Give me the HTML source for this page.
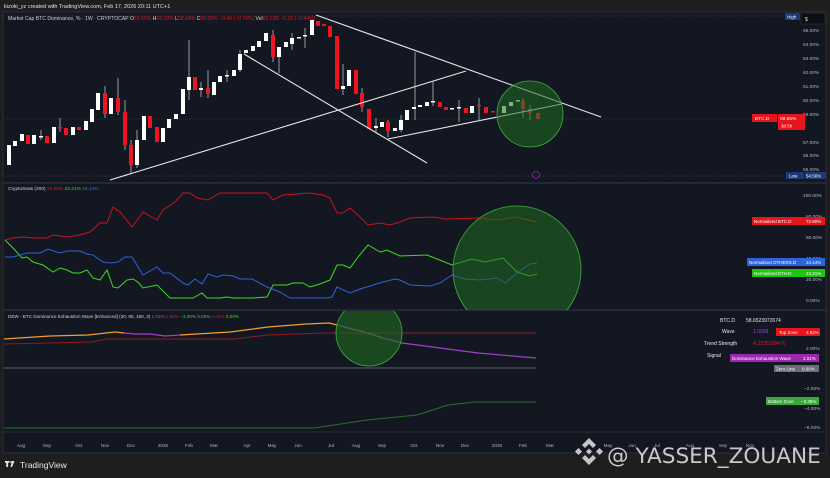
<!DOCTYPE html><html><head><meta charset="utf-8"><style>
body{margin:0;width:830px;height:478px;overflow:hidden;background:#1e1e1e;font-family:"Liberation Sans",sans-serif}
svg{display:block}
</style></head><body>
<svg width="830" height="478" viewBox="0 0 830 478" xmlns="http://www.w3.org/2000/svg" font-family="Liberation Sans, sans-serif">
<rect width="830" height="478" fill="#1e1e1e"/>
<text x="4" y="8" font-size="5.5" fill="#e0e0e0">kizoki_yz created with TradingView.com, Feb 17, 2026 20:11 UTC+1</text>
<rect x="3" y="12" width="823" height="441" fill="#131722" stroke="#2a2e39" stroke-width="1"/>
<line x1="3" y1="183" x2="826" y2="183" stroke="#2a2e39" stroke-width="1.5"/>
<line x1="3" y1="310" x2="826" y2="310" stroke="#2a2e39" stroke-width="1.5"/>
<line x1="3" y1="432" x2="826" y2="432" stroke="#2a2e39" stroke-width="1"/>
<line x1="3" y1="16" x2="790" y2="16" stroke="#3a3f4c" stroke-dasharray="1,2"/>
<line x1="3" y1="176" x2="790" y2="176" stroke="#3a3f4c" stroke-dasharray="1,2"/>
<line x1="3" y1="119" x2="752" y2="119" stroke="#6e1a22" stroke-dasharray="1,1" stroke-width="0.7"/>
<text x="8" y="20" font-size="5.1" fill="#cfd3dc">Market Cap BTC Dominance, % · 1W · CRYPTOCAP <tspan fill="#ddd">O</tspan><tspan fill="#e8141c">59.09%</tspan> <tspan fill="#ddd">H</tspan><tspan fill="#e8141c">59.10%</tspan> <tspan fill="#ddd">L</tspan><tspan fill="#e8141c">58.64%</tspan> <tspan fill="#ddd">C</tspan><tspan fill="#e8141c">58.65% −0.44 (−0.74%)</tspan> <tspan fill="#ddd">Vol</tspan><tspan fill="#e8141c">66.22B −0.26 (−0.44%)</tspan></text>
<g stroke="#bbb" stroke-width="0.8">
<line x1="189" y1="40" x2="189" y2="100"/><line x1="131" y1="140" x2="131" y2="173"/><line x1="118" y1="78" x2="118" y2="115"/><line x1="279" y1="47" x2="279" y2="73"/><line x1="415" y1="52" x2="415" y2="120"/><line x1="433" y1="81" x2="433" y2="106"/><line x1="208" y1="70" x2="208" y2="98"/><line x1="273" y1="30" x2="273" y2="62"/><line x1="105" y1="86" x2="105" y2="118"/><line x1="125" y1="100" x2="125" y2="150"/><line x1="137" y1="130" x2="137" y2="168"/><line x1="240" y1="50" x2="240" y2="72"/><line x1="292" y1="33" x2="292" y2="50"/><line x1="305" y1="28" x2="305" y2="48"/><line x1="343" y1="64" x2="343" y2="95"/><line x1="362" y1="88" x2="362" y2="112"/><line x1="376" y1="118" x2="376" y2="133"/><line x1="388" y1="120" x2="388" y2="137"/><line x1="459" y1="100" x2="459" y2="122"/><line x1="479" y1="98" x2="479" y2="120"/><line x1="523" y1="98" x2="523" y2="118"/><line x1="530" y1="105" x2="530" y2="120"/><line x1="41" y1="130" x2="41" y2="140"/><line x1="60" y1="118" x2="60" y2="132"/><line x1="201" y1="82" x2="201" y2="97"/><line x1="227" y1="70" x2="227" y2="82"/><line x1="401" y1="115" x2="401" y2="132"/></g>
<g fill="#ffffff">
<rect x="7" y="145" width="4" height="20"/><rect x="13" y="141" width="4" height="5"/><rect x="20" y="134" width="4" height="7"/><rect x="32" y="135" width="4" height="9"/><rect x="39" y="136" width="4" height="1.5"/><rect x="52" y="127" width="4" height="16"/><rect x="71" y="127" width="4" height="8"/><rect x="84" y="121" width="4" height="9"/><rect x="90" y="109" width="4" height="13"/><rect x="96" y="93" width="4" height="17"/><rect x="109" y="98" width="4" height="16"/><rect x="135" y="140" width="4" height="25"/><rect x="142" y="116" width="4" height="24"/><rect x="161" y="128" width="4" height="14"/><rect x="167" y="119" width="4" height="9"/><rect x="174" y="114" width="4" height="5"/><rect x="181" y="89" width="4" height="25"/><rect x="187" y="77" width="4" height="13"/><rect x="199" y="88" width="4" height="2"/><rect x="212" y="82" width="4" height="13"/><rect x="218" y="76" width="4" height="6"/><rect x="225" y="75" width="4" height="1.5"/><rect x="232" y="70" width="4" height="6"/><rect x="238" y="54" width="4" height="16"/><rect x="244" y="50" width="4" height="3"/><rect x="251" y="46" width="4" height="5"/><rect x="257" y="41" width="4" height="6"/><rect x="264" y="33" width="4" height="8"/><rect x="277" y="47" width="4" height="10"/><rect x="284" y="42" width="4" height="5"/><rect x="290" y="38" width="4" height="6"/><rect x="297" y="37" width="4" height="1.5"/><rect x="303" y="35" width="4" height="1.5"/><rect x="310" y="20" width="4" height="15"/><rect x="341" y="86" width="4" height="3"/><rect x="347" y="70" width="4" height="16"/><rect x="374" y="126" width="4" height="2"/><rect x="380" y="122" width="4" height="5"/><rect x="393" y="128" width="4" height="3"/><rect x="399" y="120" width="4" height="10"/><rect x="405" y="110" width="4" height="10"/><rect x="412" y="107" width="4" height="2"/><rect x="418" y="105" width="4" height="2"/><rect x="425" y="102" width="4" height="4"/><rect x="431" y="101" width="4" height="1.5"/><rect x="450" y="108" width="4" height="1.5"/><rect x="457" y="107" width="4" height="1.5"/><rect x="470" y="106" width="4" height="7"/><rect x="502" y="106" width="4" height="7"/><rect x="509" y="102" width="4" height="4"/><rect x="516" y="100" width="4" height="1.5"/></g>
<g fill="#ee1420">
<rect x="26" y="135" width="4" height="9"/><rect x="45" y="136" width="4" height="7"/><rect x="58" y="127" width="4" height="1.5"/><rect x="64" y="128" width="4" height="7"/><rect x="77" y="127" width="4" height="3"/><rect x="103" y="93" width="4" height="21"/><rect x="116" y="98" width="4" height="14"/><rect x="123" y="112" width="4" height="33"/><rect x="129" y="145" width="4" height="20"/><rect x="148" y="116" width="4" height="12"/><rect x="155" y="127" width="4" height="15"/><rect x="193" y="77" width="4" height="13"/><rect x="206" y="88" width="4" height="6"/><rect x="271" y="35" width="4" height="22"/><rect x="316" y="21" width="4" height="5"/><rect x="322" y="24" width="4" height="2"/><rect x="328" y="26" width="4" height="11"/><rect x="335" y="36" width="4" height="53"/><rect x="354" y="70" width="4" height="24"/><rect x="360" y="93" width="4" height="14"/><rect x="367" y="109" width="4" height="20"/><rect x="386" y="122" width="4" height="9"/><rect x="438" y="102" width="4" height="5"/><rect x="444" y="107" width="4" height="3"/><rect x="464" y="108" width="4" height="5"/><rect x="477" y="105" width="4" height="1.5"/><rect x="484" y="107" width="4" height="6"/><rect x="491" y="111" width="4" height="1.5"/><rect x="521" y="101" width="4" height="8"/><rect x="528" y="109" width="4" height="4"/><rect x="536" y="113" width="4" height="6"/></g>
<g stroke="#e8e8e8" stroke-width="1.1">
<line x1="316" y1="15" x2="601" y2="117"/><line x1="244" y1="54" x2="427" y2="163"/><line x1="110" y1="180" x2="466" y2="71"/><line x1="388" y1="139" x2="562" y2="104"/></g>
<circle cx="530" cy="114" r="33" fill="#1f6b1f" fill-opacity="0.55" stroke="#3fae3f" stroke-width="0.8"/>
<circle cx="536" cy="175" r="3.5" fill="none" stroke="#9c27b0" stroke-width="0.8"/>
<g font-size="4.8" fill="#b2b5be">
<text x="803" y="32">65.00%</text><text x="803" y="46">64.00%</text><text x="803" y="60">63.00%</text><text x="803" y="74">62.00%</text><text x="803" y="88">61.00%</text><text x="803" y="102">60.00%</text><text x="803" y="116">59.00%</text><text x="803" y="144">57.00%</text><text x="803" y="157">56.00%</text><text x="803" y="171">55.00%</text>
<text x="803" y="197">100.00%</text><text x="806" y="218">80.00%</text><text x="806" y="239">60.00%</text><text x="806" y="260">40.00%</text><text x="806" y="281">20.00%</text><text x="806" y="302">0.00%</text>
<text x="806" y="350">2.00%</text><text x="804" y="390">−2.00%</text><text x="804" y="429">−6.00%</text></g>
<rect x="785" y="13" width="15" height="7" fill="#1c3a78"/><text x="787" y="18.5" font-size="4.5" fill="#fff">High</text>
<rect x="801" y="13" width="24" height="11" fill="#0d0f14" stroke="#333" stroke-width="0.5"/><text x="805" y="21" font-size="5" fill="#ddd">$</text>
<rect x="752" y="114" width="25" height="8" fill="#e8141c"/><text x="755" y="120" font-size="4.8" fill="#fff">BTC.D</text>
<rect x="778" y="114" width="27" height="16" fill="#e8141c"/><text x="780" y="120" font-size="4.8" fill="#fff">58.65%</text><text x="781" y="127.5" font-size="4.5" fill="#fff">3d 5h</text>
<rect x="786" y="172" width="18" height="7" fill="#1c3a78"/><text x="789" y="177.5" font-size="4.5" fill="#fff">Low</text>
<rect x="805" y="172" width="21" height="7" fill="#1c3a78"/><text x="806" y="177.5" font-size="4.5" fill="#fff">54.56%</text>
<text x="8" y="190" font-size="4.8" fill="#cfd3dc">CryptoSeas (200) <tspan fill="#e8141c">72.80%</tspan> <tspan fill="#3ddc20">23.21%</tspan> <tspan fill="#3a6fe0">34.14%</tspan></text>
<polyline fill="none" stroke="#c8141e" stroke-width="1" points="5,240 13,238 23,237 33,238 47,238 53,235 67,237 80,235 90,232 100,223 107,223 113,207 120,212 132,227 143,212 157,220 163,210 175,202 183,193 190,193 197,198 208,200 220,193 267,193 273,200 283,195 310,193 323,195 330,198 337,213 343,213 350,208 360,217 368,225 380,223 390,225 400,222 410,218 433,217 445,219 480,218 497,220 515,217 537,222"/>
<polyline fill="none" stroke="#3ddc20" stroke-width="1" points="5,240 13,248 22,258 27,257 33,262 43,265 53,272 60,268 67,270 73,273 80,273 87,270 93,278 100,280 107,270 113,287 118,288 127,280 133,279 138,282 143,288 157,285 170,298 193,298 202,293 207,298 220,298 227,297 233,298 253,298 267,297 273,285 287,285 293,283 303,283 310,287 320,284 330,280 337,265 343,265 350,268 358,257 368,245 380,252 387,250 400,256 427,255 452,265 472,259 485,262 503,258 517,272 530,276 537,274"/>
<polyline fill="none" stroke="#2f62d8" stroke-width="1" points="5,257 13,257 27,253 40,253 48,249 60,253 67,251 80,251 87,254 93,255 103,262 110,263 118,262 125,257 132,257 143,275 157,267 163,273 170,273 183,283 188,285 195,279 202,284 208,274 217,277 223,275 233,276 240,279 252,279 267,287 280,292 290,298 327,298 332,297 337,287 350,293 360,289 370,286 383,282 395,279 400,280 410,285 430,286 440,283 452,275 465,279 480,280 497,278 505,283 517,273 530,264 537,263"/>
<clipPath id="c2"><rect x="3" y="184" width="750" height="126"/></clipPath>
<clipPath id="c3"><rect x="3" y="311" width="750" height="120"/></clipPath>
<circle cx="517" cy="270" r="64" fill="#1f6b1f" fill-opacity="0.55" stroke="#3fae3f" stroke-width="0.8" clip-path="url(#c2)"/>
<rect x="752" y="217" width="52" height="8" fill="#e8141c"/><text x="754" y="223" font-size="4.5" fill="#fff">Normalized BTC.D</text>
<rect x="804" y="217" width="21" height="8" fill="#e8141c"/><text x="806" y="223" font-size="4.5" fill="#fff">72.80%</text>
<rect x="747" y="258" width="57" height="8" fill="#2f62d8"/><text x="749" y="264" font-size="4.5" fill="#fff">Normalized OTHERS.D</text>
<rect x="804" y="258" width="21" height="8" fill="#2f62d8"/><text x="806" y="264" font-size="4.5" fill="#fff">24.14%</text>
<rect x="752" y="269" width="52" height="8" fill="#22c414"/><text x="754" y="275" font-size="4.5" fill="#fff">Normalized ETH.D</text>
<rect x="804" y="269" width="21" height="8" fill="#22c414"/><text x="806" y="275" font-size="4.5" fill="#fff">23.21%</text>
<text x="8" y="318" font-size="4.6" fill="#cfd3dc">DEW - BTC Dominance Exhaustion Wave [Enhanced] (30, 90, 180, 3) <tspan fill="#b34fd0">1.01%</tspan> <tspan fill="#e8141c">3.62%</tspan> <tspan fill="#3ddc20">−3.38%</tspan> <tspan fill="#999">0.00%</tspan> <tspan fill="#e8141c">0.00%</tspan> <tspan fill="#3ddc20">0.00%</tspan></text>
<polyline fill="none" stroke="#8a1c24" stroke-width="1" points="4,344 92,342 107,339 172,339 233,339 268,335 325,333 536,333"/>
<line x1="4" y1="368" x2="536" y2="368" stroke="#5d606b" stroke-width="1"/>
<polyline fill="none" stroke="#f0a030" stroke-width="1.2" points="4,339 50,336 88,335 115,332 124,333"/>
<polyline fill="none" stroke="#a040c8" stroke-width="1.2" points="124,333 135,334 150,334 165,336 180,335"/>
<polyline fill="none" stroke="#f0a030" stroke-width="1.2" points="180,335 230,332 268,327 306,324 329,323 337,325"/>
<polyline fill="none" stroke="#a040c8" stroke-width="1.2" points="337,325 364,332 383,338 402,343 440,348 478,353 536,358"/>
<polyline fill="none" stroke="#2e6e2e" stroke-width="1" points="4,428 314,428 367,420 417,415 448,405 475,402 536,402"/>
<circle cx="369" cy="333" r="33" fill="#1f6b1f" fill-opacity="0.6" stroke="#3fae3f" stroke-width="0.8" clip-path="url(#c3)"/>
<g font-size="5" fill="#e8e8e8"><text x="720" y="322">BTC.D</text><text x="746" y="322">58.6523972674</text><text x="722" y="333">Wave</text><text x="704" y="345">Trend Strength</text><text x="707" y="357">Signal</text></g>
<text x="753" y="333" font-size="5" fill="#a040c8">1.0068</text>
<text x="752" y="345" font-size="5" fill="#e8141c">-6.2225209476</text>
<rect x="776" y="328" width="29" height="8" fill="#e8141c"/><text x="779" y="334" font-size="4.5" fill="#fff">Top Zone</text>
<rect x="805" y="328" width="15" height="8" fill="#e8141c"/><text x="806" y="334" font-size="4.5" fill="#fff">3.62%</text>
<rect x="730" y="354" width="70" height="8" fill="#9c27b0"/><text x="732" y="360" font-size="4.5" fill="#fff">Dominance Exhaustion Wave</text>
<rect x="800" y="354" width="19" height="8" fill="#9c27b0"/><text x="803" y="360" font-size="4.5" fill="#fff">1.01%</text>
<rect x="774" y="365" width="26" height="7" fill="#6a6d78"/><text x="776" y="370.5" font-size="4.5" fill="#fff">Zero Line</text>
<rect x="800" y="365" width="19" height="7" fill="#6a6d78"/><text x="802" y="370.5" font-size="4.5" fill="#fff">0.00%</text>
<rect x="766" y="397" width="34" height="8" fill="#3aa83a"/><text x="768" y="403" font-size="4.5" fill="#fff">Bottom Zone</text>
<rect x="800" y="397" width="19" height="8" fill="#3aa83a"/><text x="801" y="403" font-size="4.5" fill="#fff">−3.38%</text>
<text x="804" y="410" font-size="4.8" fill="#b2b5be">−4.00%</text>
<g font-size="4.6" fill="#b2b5be" text-anchor="middle">
<text x="21" y="447">Aug</text><text x="47" y="447">Sep</text><text x="79" y="447">Oct</text><text x="105" y="447">Nov</text><text x="131" y="447">Dec</text><text x="163" y="447">2025</text><text x="189" y="447">Feb</text><text x="214" y="447">Mar</text><text x="247" y="447">Apr</text><text x="272" y="447">May</text><text x="298" y="447">Jun</text><text x="331" y="447">Jul</text><text x="356" y="447">Aug</text><text x="382" y="447">Sep</text><text x="414" y="447">Oct</text><text x="440" y="447">Nov</text><text x="465" y="447">Dec</text><text x="497" y="447">2026</text><text x="523" y="447">Feb</text><text x="550" y="447">Mar</text><text x="608" y="447">May</text><text x="632" y="447">Jun</text><text x="657" y="447">Jul</text><text x="690" y="447">Aug</text><text x="723" y="447">Sep</text><text x="750" y="447">Nov</text></g>
<g fill="#e8e8e8"><rect x="5" y="461" width="4.5" height="1.8"/><rect x="6.3" y="461" width="1.8" height="6"/><circle cx="11" cy="462" r="0.9"/><polygon points="12,461 14.5,461 12,467 10.5,467"/></g>
<text x="20" y="468" font-size="8.5" fill="#e8e8e8">TradingView</text>
<g fill="#d8d8d8" opacity="0.9">
<polygon points="589,438 596,445 593,448 589,444 585,448 582,445"/>
<polygon points="589,465 596,458 593,455 589,459 585,455 582,458"/>
<polygon points="575,451.5 578.5,448 582,451.5 578.5,455"/>
<polygon points="596,451.5 599.5,448 603,451.5 599.5,455"/>
<polygon points="589,448.5 592,451.5 589,454.5 586,451.5"/>
</g>
<text x="607" y="463" font-size="21.6" fill="#d8d8d8" opacity="0.92" font-family="DejaVu Sans, sans-serif">@ YASSER_ZOUANE</text>
</svg>
</body></html>
